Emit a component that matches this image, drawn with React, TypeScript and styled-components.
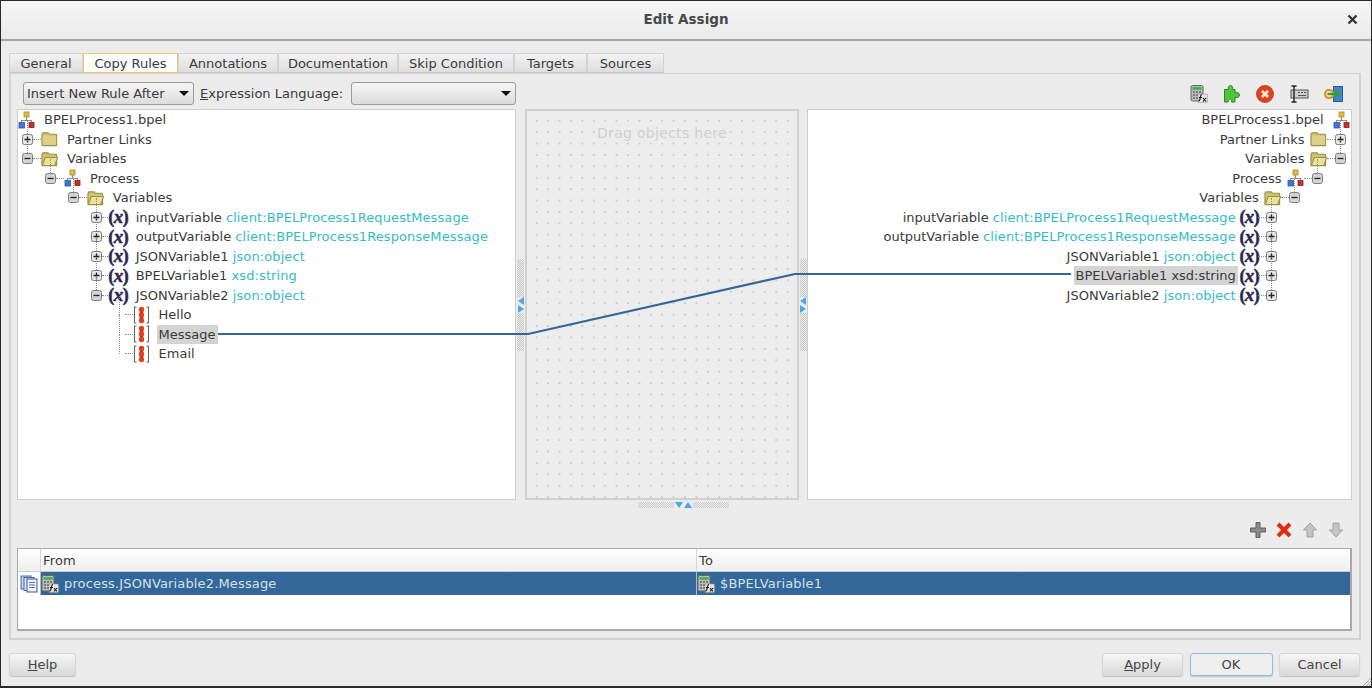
import React from 'react'
import styled, {createGlobalStyle} from 'styled-components'

const GlobalStyle = createGlobalStyle`
  html, body {
    margin: 0;
    padding: 0;
    background: #ececec;
  }
  * {
    box-sizing: border-box;
  }
`

const Window = styled.div`
  width: 1372px;
  height: 688px;
  display: flex;
  flex-direction: column;
  position: relative;
  overflow: hidden;
  background: #ececec;
  border: 1px solid #2a2a2a;
  border-bottom-width: 2px;
  color: #3a3a3a;
  font-family: "DejaVu Sans", sans-serif;
  font-size: 13px;
`
const TitleBar = styled.header`
  height: 40px;
  flex: none;
  display: grid;
  grid-template-columns: 1fr auto 1fr;
  align-items: center;
  padding: 0 13px 2px;
  background: linear-gradient(#f6f6f6, #ebebeb);
  border-bottom: 2px solid #a6a6a6;
`
const Title = styled.h1`
  grid-column: 2;
  margin: 0;
  font-size: 13.5px;
  font-weight: bold;
  color: #484848;
`
const CloseButton = styled.div`
  justify-self: end;
  display: flex;
`
const Body = styled.main`
  flex: 1;
  display: flex;
  flex-direction: column;
  padding: 12px 10px 0 8px;
`
const TabStrip = styled.div`
  display: flex;
  height: 20px;
  flex: none;
`
const Tab = styled.div<{$width: number; $active?: boolean}>`
  width: ${p => p.$width}px;
  display: flex;
  align-items: center;
  justify-content: center;
  border: 1px solid ${p => (p.$active ? '#f0c468' : '#d4d4d4')};
  border-bottom-color: ${p => (p.$active ? '#f0c468' : '#c8c8c8')};
  background: ${p => (p.$active ? '#fdfdfd' : 'linear-gradient(#f3f3f3, #dedede)')};
`
const TabPane = styled.section`
  height: 567px;
  flex: none;
  padding: 8px 9px 0 6px;
  display: flex;
  flex-direction: column;
  border: 2px solid #d4d4d4;
  border-top-width: 1px;
`
const Toolbar = styled.div`
  height: 23px;
  flex: none;
  display: flex;
  align-items: center;
  padding: 0 0 0 6px;
`
const SelectBox = styled.div<{$width: number}>`
  width: ${p => p.$width}px;
  height: 23px;
  display: flex;
  align-items: center;
  justify-content: space-between;
  padding: 0 4px 0 3px;
  border: 1px solid #9a9a9a;
  border-radius: 3px;
  background: linear-gradient(#f6f6f6, #dcdcdc);
`
const Caret = styled.span`
  width: 0;
  height: 0;
  border-left: 5px solid transparent;
  border-right: 5px solid transparent;
  border-top: 5px solid #111;
`
const FieldLabel = styled.label`
  margin: 0 8px 0 6px;
`
const ToolIcons = styled.div`
  margin-left: auto;
  display: flex;
  gap: 15px;
  padding-right: 7px;
`
const Panels = styled.div`
  height: 391px;
  flex: none;
  margin-top: 4px;
  display: flex;
  position: relative;
`
const TreePane = styled.div<{$width: number}>`
  width: ${p => p.$width}px;
  flex: none;
  background: #fff;
  border: 1px solid #cdcdcd;
`
const DropPane = styled.div`
  width: 274px;
  flex: none;
  display: flex;
  justify-content: center;
  align-items: flex-start;
  border: 2px solid #d0d0d0;
  background-color: #ededed;
  background-image: radial-gradient(circle at center, #cdcdcd 0.7px, transparent 1px);
  background-size: 11.42px 11.42px;
  background-position: 4px 4px;
`
const DropHint = styled.span`
  margin-top: 14px;
  padding: 0 2px;
  font-size: 14px;
  letter-spacing: 0.3px;
  color: #cfcfcf;
  background: #ededed;
`
const Splitter = styled.div<{$width: number}>`
  width: ${p => p.$width}px;
  flex: none;
  display: flex;
  flex-direction: column;
  align-items: center;
  justify-content: center;
`
const Grip = styled.div<{$length: number}>`
  width: 7px;
  height: ${p => p.$length}px;
  background: repeating-conic-gradient(#c6c6c6 0 25%, #eeeeee 0 50%) 0 0 / 2px 2px;
`
const SplitArrows = styled.div`
  display: flex;
  flex-direction: column;
`
const TreeRowBox = styled.div<{$depth: number; $mirror?: boolean}>`
  height: 19.5px;
  display: flex;
  align-items: center;
  flex-direction: ${p => (p.$mirror ? 'row-reverse' : 'row')};
  ${p => (p.$mirror ? 'padding-right' : 'padding-left')}: ${p =>
    (p.$depth === 0 ? 0 : 4 + 22.9 * (p.$depth - 1)) + (p.$mirror ? 1.5 : 0)}px;
`
const ExpanderCell = styled.span`
  width: 11px;
  height: 11px;
  flex: none;
  display: flex;
  position: relative;
  &::before {
    content: "";
    position: absolute;
    left: 5px;
    bottom: 5px;
    height: 19.5px;
    border-left: 1px dotted #8f8f8f;
  }
  & > svg {
    position: relative;
  }
`
const Dash = styled.span`
  width: 8px;
  flex: none;
  border-top: 1px dotted #8f8f8f;
`
const IconSlot = styled.span`
  width: 17px;
  height: 18px;
  flex: none;
  display: flex;
  align-items: center;
  justify-content: center;
`
const VariableGlyph = styled.span`
  font-family: "Liberation Serif", serif;
  font-weight: bold;
  font-size: 18px;
  line-height: 18px;
  white-space: nowrap;
  letter-spacing: -0.6px;
  color: #2b2650;
  -webkit-text-stroke: 0.5px #2b2650;
  & > i {
    font-size: 19px;
  }
`
const TreeLabel = styled.span<{$selected?: boolean; $mirror?: boolean; $depth: number}>`
  ${p => (p.$mirror ? 'margin-right' : 'margin-left')}: ${p => (p.$mirror && p.$depth > 0 ? 3 : 7)}px;
  padding: 1px 2px;
  white-space: nowrap;
  line-height: 17px;
  background: ${p => (p.$selected ? '#d4d4d4' : 'transparent')};
`
const TypeName = styled.span`
  color: #34bcc4;
  letter-spacing: 0.1px;
`
const LinkOverlay = styled.svg`
  position: absolute;
  left: 0;
  top: 0;
  pointer-events: none;
`
const HSplitter = styled.div`
  height: 9px;
  flex: none;
  display: flex;
  align-items: center;
  justify-content: center;
  gap: 1px;
`
const HGrip = styled.div`
  width: 36px;
  height: 6px;
  background: repeating-conic-gradient(#c9c9c9 0 25%, #eeeeee 0 50%) 0 0 / 2px 2px;
`
const RuleActions = styled.div`
  height: 39px;
  flex: none;
  display: flex;
  justify-content: flex-end;
  align-items: center;
  gap: 8px;
  padding: 2px 5px 0 0;
`
const Table = styled.div`
  height: 83px;
  width: 1335px;
  flex: none;
  background: #fff;
  border: 2px solid #a9a9a9;
  border-width: 1px 2px 2px 1px;
`
const TableRow = styled.div<{$header?: boolean}>`
  display: grid;
  grid-template-columns: 22px 656px 1fr;
  height: 23px;
  background: ${p => (p.$header ? 'linear-gradient(#ffffff, #efefef)' : '#fff')};
  border-bottom: ${p => (p.$header ? '1px solid #cdcdcd' : '0')};
`
const Cell = styled.div<{$selected?: boolean; $header?: boolean}>`
  display: flex;
  align-items: center;
  gap: 5px;
  padding-left: ${p => (p.$header ? 2 : 0)}px;
  background: ${p => (p.$selected ? '#336699' : 'transparent')};
  color: ${p => (p.$selected ? '#d5e1ed' : '#3a3a3a')};
  border-left: 1px solid ${p => (p.$selected ? '#a9bdd2' : '#d4d4d4')};
  letter-spacing: 0.15px;
  &:first-child {
    border-left: 0;
    justify-content: center;
    padding-left: 0;
  }
`
const Footer = styled.footer`
  flex: 1;
  display: flex;
  align-items: flex-start;
  padding-top: 13px;
`
const Button = styled.button<{$width: number; $default?: boolean}>`
  width: ${p => p.$width}px;
  height: 23px;
  padding: 0 0 1px;
  font: inherit;
  color: #444;
  border-radius: 3px;
  border: 1px solid ${p => (p.$default ? '#8dbfe6' : '#d6d6d6')};
  background: ${p => (p.$default ? '#efefef' : 'linear-gradient(#f6f6f6, #d9d9d9)')};
  box-shadow: 0 1px 1px #c2c2c2;
`
const FooterActions = styled.div`
  margin-left: auto;
  display: flex;
  gap: 6.5px;
  padding-right: 1px;
`
const ResizeGrip = styled.svg`
  position: absolute;
  right: 0;
  bottom: 0;
`

const Expander = ({open}: {open?: boolean}) => (
    <svg width="11" height="11" viewBox="0 0 11 11">
        <rect x="0.5" y="0.5" width="10" height="10" rx="2" fill={open ? '#d4d4d4' : '#e6e6e6'} stroke="#7d7d7d"/>
        <path d={open ? 'M2.5 5.5h6' : 'M2.5 5.5h6M5.5 2.5v6'} stroke="#222" strokeWidth="1.3"/>
    </svg>
)

const ProcessIcon = () => (
    <svg width="17" height="18" viewBox="0 0 17 18">
        <path d="M8.5 5v4M3.5 12V9.5h10V12" fill="none" stroke="#8c8c8c" strokeWidth="1.2"/>
        <rect x="6" y="1" width="5" height="5" fill="#e8b93a" stroke="#a98a2e" strokeWidth="0.8"/>
        <rect x="1" y="11.5" width="5.5" height="5.5" fill="#3f75d8" stroke="#2c57a8" strokeWidth="0.8"/>
        <rect x="11" y="11.5" width="5" height="5" fill="#c9302c" stroke="#8f2220" strokeWidth="0.8"/>
    </svg>
)

const FolderIcon = ({open}: {open?: boolean}) => (
    <svg width="18" height="16" viewBox="0 0 18 16">
        <path d="M1 3 2 1.5h5.5L9 3h7l.5 1v11H1.5L1 14.5z" fill="#cfc46e" stroke="#99904a" strokeWidth="1.2"/>
        {open
            ? <path d="M1.5 14.8 4.5 6.5h13l-3 8.3z" fill="#ebe39a" stroke="#99904a" strokeWidth="1.1"/>
            : <path d="M2 4.5h14V14H2z" fill="#ddd388"/>}
    </svg>
)

const ElementIcon = () => (
    <svg width="17" height="18" viewBox="0 0 17 18">
        <path d="M3.5 1H1.5v16h2M13.5 1h2v16h-2" fill="none" stroke="#666" strokeWidth="1.1"/>
        <circle cx="8.5" cy="3.5" r="2.7" fill="#e5401c"/>
        <circle cx="8.5" cy="9" r="2.7" fill="#e5401c"/>
        <circle cx="8.5" cy="14.5" r="2.7" fill="#e5401c"/>
        <path d="M6.5 6.2h4M6.5 11.8h4" stroke="#8d2a12" strokeWidth="1"/>
    </svg>
)

const CalcIcon = () => (
    <svg width="18" height="18" viewBox="0 0 18 18">
        <rect x="1" y="0.5" width="12" height="15.5" rx="1.5" fill="#bdbdbd" stroke="#666"/>
        <rect x="2.5" y="2" width="9" height="2.8" fill="#3fb54a"/>
        <path d="M3 7h2M6 7h2M9 7h2M3 10h2M6 10h2M3 13h2M6 13h2" stroke="#666" strokeWidth="1.4"/>
        <rect x="8" y="9" width="9.5" height="8.5" fill="#e4e4e4" stroke="#8a8a8a" strokeWidth="0.5"/>
        <path d="M12 9.5c-1.5 0-1.4 1-1.700 3-.3 2-.5 3.500-2 3.500M9 12.500h3M13 13l3 3.500M16 13l-3 3.500" fill="none" stroke="#111" strokeWidth="1.1"/>
    </svg>
)

const PuzzleIcon = () => (
    <svg width="18" height="18" viewBox="0 0 18 18">
        <path d="M1.5 4.5h4c-1-2.500.5-4 2-4s3 1.500 2 4h2.500v3.500c2.200-1 4.500-.2 4.500 2s-2.300 3-4.500 2.200V17H8.500c.6-2-.3-3-1.600-3s-2.200 1-1.600 3H1.500z" fill="#4fc73c" stroke="#2f8526"/>
    </svg>
)

const ErrorIcon = () => (
    <svg width="18" height="18" viewBox="0 0 18 18">
        <circle cx="9" cy="9" r="8.5" fill="#e0421f" stroke="#b8331a" strokeWidth="0.8"/>
        <path d="M6 6l6 6M12 6l-6 6" stroke="#fbe8e2" strokeWidth="2.6"/>
    </svg>
)

const CursorFieldIcon = () => (
    <svg width="20" height="18" viewBox="0 0 20 18">
        <rect x="2" y="5" width="17" height="8" fill="#cfcfcf" stroke="#555"/>
        <path d="M9 7.5h2M12 7.5h2M15 7.5h2M9 10.5h8" stroke="#555"/>
        <path d="M2.5 1h5M5 1v16M2.5 17h5" stroke="#222" strokeWidth="1.4" fill="none"/>
    </svg>
)

const TransferIcon = () => (
    <svg width="19" height="18" viewBox="0 0 19 18">
        <rect x="9.500" y="1.500" width="9" height="15" fill="#3d86cc" stroke="#245d96"/>
        <rect x="1.200" y="5" width="8" height="8" rx="3.500" fill="none" stroke="#ec8f1c" strokeWidth="2.200"/>
        <path d="M3.500 9h8" stroke="#2f9e35" strokeWidth="2.400"/>
        <path d="M11 5l5.500 4-5.500 4z" fill="#2f9e35"/>
    </svg>
)

const AddIcon = () => (
    <svg width="18" height="18" viewBox="0 0 18 18">
        <path d="M7 1.5h4v5.500h5.500v4H11v5.500H7V11H1.500V7H7z" fill="#8d8d8d" stroke="#5f5f5f"/>
    </svg>
)

const RemoveIcon = () => (
    <svg width="18" height="18" viewBox="0 0 18 18">
        <path d="M3 3l12 12M15 3L3 15" stroke="#e02c12" strokeWidth="4"/>
    </svg>
)

const ArrowIcon = ({down}: {down?: boolean}) => (
    <svg width="18" height="18" viewBox="0 0 18 18">
        <path
            d={down ? 'M6 2h6v7h3.500L9 16 2.500 9H6z' : 'M6 16h6V9h3.500L9 2 2.500 9H6z'}
            fill="#c4c4c4"
            stroke="#a2a2a2"
        />
    </svg>
)

const CopiesIcon = () => (
    <svg width="18" height="18" viewBox="0 0 18 18">
        <rect x="1" y="1" width="10" height="13" fill="#c5d3ec" stroke="#4c67a8"/>
        <rect x="4" y="2.5" width="10" height="13" fill="#dbe4f4" stroke="#4c67a8"/>
        <rect x="7" y="4" width="10" height="13" fill="#eef2fa" stroke="#3d5799"/>
        <path d="M9 7.5h6M9 10h6M9 12.5h6" stroke="#5a74b0"/>
    </svg>
)

const TriangleIcon = ({dir}: {dir: 'left' | 'right' | 'up' | 'down'}) => {
    const points = {
        left: '6,0 6,8 0,4',
        right: '0,0 0,8 6,4',
        up: '0,6 8,6 4,0',
        down: '0,0 8,0 4,6',
    }[dir]
    const horizontal = dir === 'up' || dir === 'down'
    return (
        <svg width={horizontal ? 8 : 6} height={horizontal ? 6 : 8} display="block">
            <polygon points={points} fill="#45a9ec"/>
        </svg>
    )
}

type NodeIcon = 'process' | 'folder' | 'folderOpen' | 'variable' | 'element'

type TreeNode = {
    depth: number
    icon: NodeIcon
    name: string
    type?: string
    expander?: 'open' | 'closed'
    selected?: boolean
}

const renderIcon = (icon: NodeIcon) => {
    switch (icon) {
        case 'process':
            return <ProcessIcon/>
        case 'folder':
            return <FolderIcon/>
        case 'folderOpen':
            return <FolderIcon open/>
        case 'element':
            return <ElementIcon/>
        default:
            return <VariableGlyph>(<i>x</i>)</VariableGlyph>
    }
}

const leftTree: TreeNode[] = [
    {depth: 0, icon: 'process', name: 'BPELProcess1.bpel'},
    {depth: 1, icon: 'folder', name: 'Partner Links', expander: 'closed'},
    {depth: 1, icon: 'folderOpen', name: 'Variables', expander: 'open'},
    {depth: 2, icon: 'process', name: 'Process', expander: 'open'},
    {depth: 3, icon: 'folderOpen', name: 'Variables', expander: 'open'},
    {depth: 4, icon: 'variable', name: 'inputVariable', type: 'client:BPELProcess1RequestMessage', expander: 'closed'},
    {depth: 4, icon: 'variable', name: 'outputVariable', type: 'client:BPELProcess1ResponseMessage', expander: 'closed'},
    {depth: 4, icon: 'variable', name: 'JSONVariable1', type: 'json:object', expander: 'closed'},
    {depth: 4, icon: 'variable', name: 'BPELVariable1', type: 'xsd:string', expander: 'closed'},
    {depth: 4, icon: 'variable', name: 'JSONVariable2', type: 'json:object', expander: 'open'},
    {depth: 5, icon: 'element', name: 'Hello'},
    {depth: 5, icon: 'element', name: 'Message', selected: true},
    {depth: 5, icon: 'element', name: 'Email'},
]

const rightTree: TreeNode[] = [
    {depth: 0, icon: 'process', name: 'BPELProcess1.bpel'},
    {depth: 1, icon: 'folder', name: 'Partner Links', expander: 'closed'},
    {depth: 1, icon: 'folderOpen', name: 'Variables', expander: 'open'},
    {depth: 2, icon: 'process', name: 'Process', expander: 'open'},
    {depth: 3, icon: 'folderOpen', name: 'Variables', expander: 'open'},
    {depth: 4, icon: 'variable', name: 'inputVariable', type: 'client:BPELProcess1RequestMessage', expander: 'closed'},
    {depth: 4, icon: 'variable', name: 'outputVariable', type: 'client:BPELProcess1ResponseMessage', expander: 'closed'},
    {depth: 4, icon: 'variable', name: 'JSONVariable1', type: 'json:object', expander: 'closed'},
    {depth: 4, icon: 'variable', name: 'BPELVariable1', type: 'xsd:string', expander: 'closed', selected: true},
    {depth: 4, icon: 'variable', name: 'JSONVariable2', type: 'json:object', expander: 'closed'},
]

const Tree = ({nodes, mirror}: {nodes: TreeNode[], mirror?: boolean}) => (
    <>
        {nodes.map((node, i) => (
            <TreeRowBox key={i} $depth={node.depth} $mirror={mirror}>
                {node.depth > 0 && (
                    <>
                        <ExpanderCell>
                            {node.expander && <Expander open={node.expander === 'open'}/>}
                        </ExpanderCell>
                        <Dash/>
                    </>
                )}
                <IconSlot>{renderIcon(node.icon)}</IconSlot>
                <TreeLabel $selected={node.selected} $mirror={mirror} $depth={node.depth}>
                    {node.name}
                    {node.type && (
                        <>
                            {' '}
                            {node.selected && mirror ? node.type : <TypeName>{node.type}</TypeName>}
                        </>
                    )}
                </TreeLabel>
            </TreeRowBox>
        ))}
    </>
)

const tabs = [
    {title: 'General', width: 74},
    {title: 'Copy Rules', width: 95, active: true},
    {title: 'Annotations', width: 100},
    {title: 'Documentation', width: 120},
    {title: 'Skip Condition', width: 116},
    {title: 'Targets', width: 73},
    {title: 'Sources', width: 77},
]

const SideSplitter = ({width}: {width: number}) => (
    <Splitter $width={width}>
        <Grip $length={38}/>
        <SplitArrows>
            <TriangleIcon dir="left"/>
            <TriangleIcon dir="right"/>
        </SplitArrows>
        <Grip $length={38}/>
    </Splitter>
)

const App = () => {
    return (
        <Window>
            <GlobalStyle/>
            <TitleBar>
                <Title>Edit Assign</Title>
                <CloseButton>
                    <svg width="11" height="11" viewBox="0 0 11 11">
                        <path d="M1.5 1.5l8 8M9.5 1.5l-8 8" stroke="#333" strokeWidth="2.4"/>
                    </svg>
                </CloseButton>
            </TitleBar>
            <Body>
                <TabStrip>
                    {tabs.map(tab => (
                        <Tab key={tab.title} $width={tab.width} $active={tab.active}>{tab.title}</Tab>
                    ))}
                </TabStrip>
                <TabPane>
                    <Toolbar>
                        <SelectBox $width={171}>Insert New Rule After<Caret/></SelectBox>
                        <FieldLabel><u>E</u>xpression Language:</FieldLabel>
                        <SelectBox $width={165}><span/><Caret/></SelectBox>
                        <ToolIcons>
                            <CalcIcon/>
                            <PuzzleIcon/>
                            <ErrorIcon/>
                            <CursorFieldIcon/>
                            <TransferIcon/>
                        </ToolIcons>
                    </Toolbar>
                    <Panels>
                        <TreePane $width={499}>
                            <Tree nodes={leftTree}/>
                        </TreePane>
                        <SideSplitter width={9}/>
                        <DropPane>
                            <DropHint>Drag objects here</DropHint>
                        </DropPane>
                        <SideSplitter width={8}/>
                        <TreePane $width={545}>
                            <Tree nodes={rightTree} mirror/>
                        </TreePane>
                        <LinkOverlay width="1335" height="391">
                            <polyline
                                points="201,225 511,225 778,165 1054,165"
                                fill="none"
                                stroke="#336699"
                                strokeWidth="2.2"
                            />
                        </LinkOverlay>
                    </Panels>
                    <HSplitter>
                        <HGrip/>
                        <TriangleIcon dir="down"/>
                        <TriangleIcon dir="up"/>
                        <HGrip/>
                    </HSplitter>
                    <RuleActions>
                        <AddIcon/>
                        <RemoveIcon/>
                        <ArrowIcon/>
                        <ArrowIcon down/>
                    </RuleActions>
                    <Table>
                        <TableRow $header>
                            <Cell $header/>
                            <Cell $header>From</Cell>
                            <Cell $header>To</Cell>
                        </TableRow>
                        <TableRow>
                            <Cell><CopiesIcon/></Cell>
                            <Cell $selected><CalcIcon/>process.JSONVariable2.Message</Cell>
                            <Cell $selected><CalcIcon/>$BPELVariable1</Cell>
                        </TableRow>
                    </Table>
                </TabPane>
                <Footer>
                    <Button $width={67}><u>H</u>elp</Button>
                    <FooterActions>
                        <Button $width={81}><u>A</u>pply</Button>
                        <Button $width={83} $default>OK</Button>
                        <Button $width={81}>Cancel</Button>
                    </FooterActions>
                </Footer>
            </Body>
            <ResizeGrip width="10" height="10" viewBox="0 0 10 10">
                <path d="M2 10l8-8M5 10l5-5M8 10l2-2" stroke="#a8a8a8"/>
            </ResizeGrip>
        </Window>
    )
}

export default App
